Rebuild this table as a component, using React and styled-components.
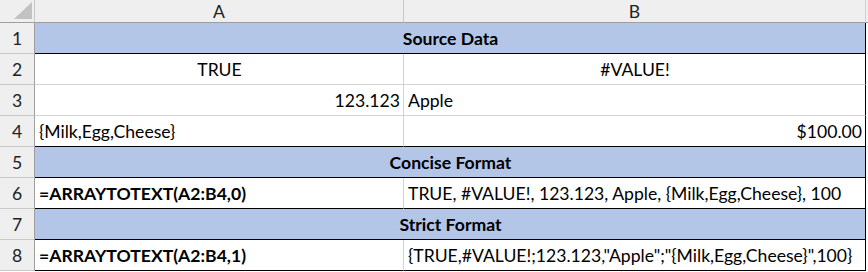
import React from "react";
import styled, { createGlobalStyle } from "styled-components";

const GlobalStyle = createGlobalStyle`
  html, body {
    margin: 0;
    padding: 0;
    background: #ffffff;
  }
  body {
    font-family: Lato, "Open Sans", sans-serif;
    color: #000;
  }
`;

const rows = [
  { n: 1, kind: "title", text: "Source Data" },
  { n: 2, a: { text: "TRUE", align: "center" }, b: { text: "#VALUE!", align: "center" } },
  { n: 3, a: { text: "123.123", align: "right" }, b: { text: "Apple", align: "left" } },
  { n: 4, a: { text: "{Milk,Egg,Cheese}", align: "left" }, b: { text: "$100.00", align: "right" }, dark: true },
  { n: 5, kind: "title", text: "Concise Format" },
  {
    n: 6,
    a: { text: "=ARRAYTOTEXT(A2:B4,0)", align: "left", bold: true },
    b: { text: "TRUE, #VALUE!, 123.123, Apple, {Milk,Egg,Cheese}, 100", align: "left" },
    dark: true,
  },
  { n: 7, kind: "title", text: "Strict Format" },
  {
    n: 8,
    a: { text: "=ARRAYTOTEXT(A2:B4,1)", align: "left", bold: true },
    b: { text: "{TRUE,#VALUE!;123.123,\"Apple\";\"{Milk,Egg,Cheese}\",100}", align: "left" },
    dark: true,
  },
];

export default function App() {
  return (
    <>
      <GlobalStyle />
      <Sheet>
        <Corner>
          <svg width="18" height="17" viewBox="0 0 18 17">
            <polygon points="18,0 18,17 0,17" fill="#c2c2c2" />
          </svg>
        </Corner>
        <ColHeader>A</ColHeader>
        <ColHeader $last>B</ColHeader>
        <HeaderFill />
        {rows.map((r) => (
          <React.Fragment key={r.n}>
            <RowHeader>{r.n}</RowHeader>
            {r.kind === "title" ? (
              <Cell $span $fill $align="center" $bold $dark>
                {r.text}
              </Cell>
            ) : (
              <>
                <Cell $align={r.a.align} $bold={r.a.bold} $dark={r.dark}>
                  {r.a.text}
                </Cell>
                <Cell $align={r.b.align} $bold={r.b.bold} $dark={r.dark} $edge>
                  {r.b.text}
                </Cell>
              </>
            )}
            <Spacer />
          </React.Fragment>
        ))}
      </Sheet>
    </>
  );
}

const Sheet = styled.div`
  display: grid;
  grid-template-columns: 35px 369px 462px 2px;
  grid-template-rows: 23px repeat(8, 31px);
  width: 868px;
  height: 272px;
  overflow: hidden;
`;

const Corner = styled.div`
  box-sizing: border-box;
  background: #efefef;
  border-right: 1px solid #c8c8c8;
  border-bottom: 1px solid #9e9e9e;
  display: flex;
  align-items: flex-end;
  justify-content: flex-end;
  padding: 0 2px 3px 0;
`;

const ColHeader = styled.div`
  box-sizing: border-box;
  background: #efefef;
  border-right: 1px solid ${(p) => (p.$last ? "#d0d0d0" : "#c8c8c8")};
  border-bottom: 1px solid #9e9e9e;
  display: flex;
  align-items: center;
  justify-content: center;
  font-size: 17.6px;
  color: #222;
  padding-top: 1px;
`;

const HeaderFill = styled.div`
  background: #efefef;
  border-bottom: 1px solid #9e9e9e;
  box-sizing: border-box;
`;

const RowHeader = styled.div`
  box-sizing: border-box;
  background: #efefef;
  border-right: 1px solid #9e9e9e;
  border-bottom: 1px solid #c8c8c8;
  display: flex;
  align-items: flex-end;
  justify-content: center;
  padding-bottom: 4px;
  font-size: 17.6px;
  color: #222;
`;

const Cell = styled.div`
  box-sizing: border-box;
  grid-column: ${(p) => (p.$span ? "span 2" : "auto")};
  background: ${(p) => (p.$fill ? "#b4c6e7" : "#ffffff")};
  border-bottom: 1px solid ${(p) => (p.$dark || p.$fill ? "#000" : "#d4d4d4")};
  border-right: 1px solid ${(p) => (p.$edge || p.$span ? "#000" : "#d4d4d4")};
  display: flex;
  align-items: flex-end;
  justify-content: ${(p) =>
    p.$align === "center" ? "center" : p.$align === "right" ? "flex-end" : "flex-start"};
  padding: 0 3px 4px 4px;
  font-size: 17.6px;
  font-weight: ${(p) => (p.$bold ? 700 : 400)};
  white-space: nowrap;
  overflow: hidden;
`;

const Spacer = styled.div`
  background: #ffffff;
`;
